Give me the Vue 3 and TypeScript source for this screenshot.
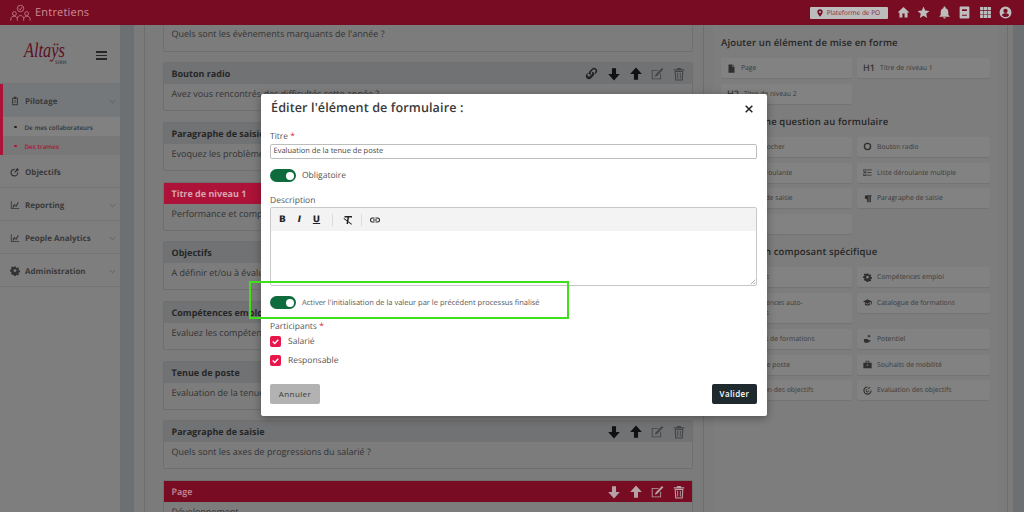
<script setup lang="ts">
const icons: Record<string, string> = {
  home: 'M10 21v-7h4v7h5.500v-9H23L12 2 1 12h3.500v9z',
  star: 'M12 17.800 18.800 22l-1.800-7.700L23 9.100l-7.900-.7L12 1 8.900 8.400 1 9.100l6 5.200L5.200 22z',
  bell: 'M12 23c1.300 0 2.400-1 2.400-2.300H9.600C9.600 22 10.700 23 12 23zm7-6.500V11c0-3.400-1.800-6.200-5-7V3.200C14 2 13.100 1 12 1s-2 1-2 2.200V4c-3.200.8-5 3.600-5 7v5.500l-2.500 2.300v.9h19v-.9z',
  book: 'M4.500 1h15A1.500 1.500 0 0 1 21 2.500v19a1.500 1.500 0 0 1-1.500 1.500h-15A1.500 1.500 0 0 1 3 21.500v-19A1.500 1.500 0 0 1 4.500 1zM7.500 6v3h9V6zm0 10v2h9v-2z',
  grid: 'M2 2h6v6H2zM9 2h6v6H9zM16 2h6v6h-6zM2 9h6v6H2zM9 9h6v6H9zM16 9h6v6h-6zM2 16h6v6H2zM9 16h6v6H9zM16 16h6v6h-6z',
  user: 'M12 1a11 11 0 1 0 0 22 11 11 0 0 0 0-22zm0 4a4 4 0 1 1 0 8 4 4 0 0 1 0-8zm0 15.500a8 8 0 0 1-6.500-3.500c.03-2.200 4.300-3.400 6.500-3.400s6.470 1.200 6.500 3.400a8 8 0 0 1-6.500 3.500z',
  pin: 'M12 1a8 8 0 0 0-8 8c0 6 8 14 8 14s8-8 8-14a8 8 0 0 0-8-8zm0 11a3 3 0 1 1 0-6 3 3 0 0 1 0 6z',
  down: 'M8.500 2h7v10H22L12 23 2 12h6.500z',
  up: 'M12 1l10 11h-6.500v10h-7V12H2z',
  edit: 'M19 11.500V21H3V5h11.500v1.500h-10v13h13v-8zM20.500 1.500l2.500 2.500L12 15.500l-3.500 1 1-3.500z',
  trash: 'M9 1.500h6L16 4h5v2H3V4h5zM4.500 7h15L18.500 23h-13zM6.500 8.500l.8 13h9.400l.8-13zM9 10h1.500v9.500H9zM13.500 10H15v9.500h-1.500z',
  link: 'M9.500 14.500a4.800 4.800 0 0 1 0-6.800l3.200-3.200a4.800 4.800 0 0 1 6.800 6.800l-1.800 1.800-1.500-1.500 1.800-1.800a2.700 2.700 0 0 0-3.800-3.800L11.500 9.200a2.700 2.700 0 0 0 0 3.800zM14.500 9.500a4.800 4.800 0 0 1 0 6.800l-3.200 3.200a4.800 4.800 0 0 1-6.800-6.800l1.800-1.800 1.500 1.500L6 12.200a2.700 2.700 0 0 0 3.800 3.800l2.700-2.700a2.700 2.700 0 0 0 0-3.800z',
  clipboard: 'M9 2h6v2h3a1 1 0 0 1 1 1v16a1 1 0 0 1-1 1H6a1 1 0 0 1-1-1V5a1 1 0 0 1 1-1h3zm-2 4v14h10V6h-2v1H9V6zm1.500 4h7v1.500h-7zm0 4h7v1.500h-7z',
  bullseye: 'M11 4a9.500 9.500 0 1 0 9 9h-3a6.500 6.500 0 1 1-6-6zM14 6l4-4 1 3 3 1-4 4h-2l-4 4-2-2 4-4z',
  chart: 'M2 3h2v16h18v2H2zM6 17l4-8 4 4 5-8 2 1-6 11-4-4-3 6z',
  cog: 'M10 1h4l.6 3 1.900.800 2.500-1.700 2.900 2.900-1.700 2.500.800 1.900 3 .6v4l-3 .6-.800 1.900 1.700 2.500-2.900 2.900-2.500-1.700-1.900.800-.6 3h-4l-.6-3-1.900-.800L5 20.900 2.100 18l1.700-2.500L3 13.600l-3-.6V9l3-.6.800-1.900L2.100 4 5 1.100l2.500 1.700 1.900-.800zm2 6.500a3.500 3.500 0 1 0 0 7 3.500 3.500 0 0 0 0-7z',
  file: 'M4 1h10v7h6v15H4zM15.500 1 20 6.500h-4.500z',
  radio: 'M12 2a10 10 0 1 0 0 20 10 10 0 0 0 0-20zm0 3.500a6.500 6.500 0 1 1 0 13 6.500 6.500 0 0 1 0-13z',
  list: 'M1 3h8v6H1zM2.500 4.500v3h5v-3zM1 15h8v6H1zM2.500 16.500v3h5v-3zM11 4h12v2H11zM11 11h12v2H11zM1 11h8v2H1zM11 18h12v2H11z',
  para: 'M9 3h14v3h-2v16h-4V6h-2v16h-4v-8a5.500 5.500 0 0 1-2-11z',
  cap: 'M12 3 0 9l12 6 10-5v7h2V9zM5 13.500V18c2.500 3 11.500 3 14 0v-4.500L12 17z',
  sprout: 'M16 1l1.500 3L21 5.500 17.500 7 16 10l-1.500-3L11 5.500 14.500 4zM2 13h11l1.500 4 4.500-1 2 2-8 5H4z',
  case: 'M9 2h6a2 2 0 0 1 2 2v3h6v15H1V7h6V4a2 2 0 0 1 2-2zm0 2v3h6V4zm1 8v3h4v-3z',
  target: 'M12 1a11 11 0 1 0 11 11h-3a8 8 0 1 1-8-8zm0 6a5 5 0 1 0 5 5h-2a3 3 0 1 1-3-3zM14 4v3h3l3-3-1-1z',
}

interface Tile { label: string; icon?: string; mark?: string; wrap?: boolean }

const cards = [
  { title: 'Bouton radio', text: 'Avez vous rencontrés des difficultés cette année ?', link: true },
  { title: 'Paragraphe de saisie', text: 'Evoquez les problèmes rencontrés cette année ?' },
  { title: 'Titre de niveau 1', text: 'Performance et compétences', heading: true },
  { title: 'Objectifs', text: 'A définir et/ou à évaluer' },
  { title: 'Compétences emploi', text: 'Evaluez les compétences du salarié' },
  { title: 'Tenue de poste', text: 'Evaluation de la tenue de poste' },
  { title: 'Paragraphe de saisie', text: 'Quels sont les axes de progressions du salarié ?' },
]

const navItems = [
  { label: 'Objectifs', icon: 'bullseye', chevron: false },
  { label: 'Reporting', icon: 'chart', chevron: true },
  { label: 'People Analytics', icon: 'chart', chevron: true },
  { label: 'Administration', icon: 'cog', chevron: true },
]

const sections: { title: string; tiles: Tile[] }[] = [
  {
    title: 'Ajouter un élément de mise en forme',
    tiles: [
      { label: 'Page', icon: 'file' },
      { label: 'Titre de niveau 1', mark: 'H1' },
      { label: 'Titre de niveau 2', mark: 'H2' },
    ],
  },
  {
    title: 'Ajouter une question au formulaire',
    tiles: [
      { label: 'Case à cocher', icon: 'radio' },
      { label: 'Bouton radio', icon: 'radio' },
      { label: 'Liste déroulante', icon: 'list' },
      { label: 'Liste déroulante multiple', icon: 'list' },
      { label: 'Champ de saisie', icon: 'para' },
      { label: 'Paragraphe de saisie', icon: 'para' },
      { label: 'Date', icon: 'file' },
    ],
  },
  {
    title: 'Ajouter un composant spécifique',
    tiles: [
      { label: 'Objectifs', icon: 'target' },
      { label: 'Compétences emploi', icon: 'cog' },
      { label: 'Compétences auto-évaluées', icon: 'cog', wrap: true },
      { label: 'Catalogue de formations', icon: 'cap' },
      { label: 'Souhaits de formations', icon: 'cap' },
      { label: 'Potentiel', icon: 'sprout' },
      { label: 'Tenue de poste', icon: 'case' },
      { label: 'Souhaits de mobilité', icon: 'case' },
      { label: 'Définition des objectifs', icon: 'target' },
      { label: 'Evaluation des objectifs', icon: 'target' },
    ],
  },
]
</script>

<template>
  <div class="app">
    <header class="topbar">
      <svg class="topbar__logo" viewBox="0 0 32 28" fill="none" stroke="#cf8b9b" stroke-width="1.200">
        <circle cx="16" cy="7" r="5" />
        <path d="M13.500 7l2 2 3-4" />
        <circle cx="6.500" cy="15" r="3" />
        <circle cx="25.500" cy="15" r="3" />
        <path d="M1 26v-3c0-2 2-4 5-4s5 2 5 4v3M21 26v-3c0-2 2-4 5-4s5 2 5 4v3M11 22c1-3 3-4 5-4s4 1 5 4" />
      </svg>
      <span class="topbar__title">Entretiens</span>
      <div class="topbar__right">
        <span class="platform">
          <svg viewBox="0 0 24 24"><path :d="icons.pin" /></svg>
          Plateforme de PO
        </span>
        <svg v-for="name in ['home', 'star', 'bell', 'book', 'grid', 'user']" :key="name" class="topbar__icon" viewBox="0 0 24 24">
          <path :d="icons[name]" />
        </svg>
      </div>
    </header>

    <div class="layout">
      <aside class="sidebar">
        <div class="brand">
          <span class="brand__name">Altaÿs</span>
          <span class="brand__sub">SIRH</span>
          <span class="burger"><i /><i /><i /></span>
        </div>
        <div class="group">
          <div class="nav nav--open">
            <svg class="nav__icon" viewBox="0 0 24 24"><path :d="icons.clipboard" /></svg>
            <span class="nav__label">Pilotage</span>
            <svg class="nav__chevron" viewBox="0 0 12 12"><path d="M1.500 4 6 8l4.500-4" /></svg>
          </div>
          <div class="sub"><i />De mes collaborateurs</div>
          <div class="sub sub--active"><i />Des trames</div>
        </div>
        <div v-for="item in navItems" :key="item.label" class="nav">
          <svg class="nav__icon" viewBox="0 0 24 24"><path :d="icons[item.icon]" /></svg>
          <span class="nav__label">{{ item.label }}</span>
          <svg v-if="item.chevron" class="nav__chevron" viewBox="0 0 12 12"><path d="M1.500 4 6 8l4.500-4" /></svg>
        </div>
      </aside>

      <div class="gutter" />

      <main class="content">
        <section class="card card--clipped">
          <p class="card__text">Quels sont les évènements marquants de l'année ?</p>
        </section>
        <section v-for="card in cards" :key="card.title + card.text" class="card">
          <div class="card__head" :class="{ 'card__head--heading': card.heading }">
            <span>{{ card.title }}</span>
            <span class="card__tools">
              <svg v-if="card.link" class="tool tool--link" viewBox="0 0 24 24"><path :d="icons.link" /></svg>
              <svg class="tool" viewBox="0 0 24 24"><path :d="icons.down" /></svg>
              <svg class="tool" viewBox="0 0 24 24"><path :d="icons.up" /></svg>
              <svg class="tool tool--soft" viewBox="0 0 24 24"><path :d="icons.edit" /></svg>
              <svg class="tool tool--soft" viewBox="0 0 24 24"><path :d="icons.trash" /></svg>
            </span>
          </div>
          <p class="card__text">{{ card.text }}</p>
        </section>
        <section class="card">
          <div class="card__head card__head--page">
            <span>Page</span>
            <span class="card__tools">
              <svg class="tool" viewBox="0 0 24 24"><path :d="icons.down" /></svg>
              <svg class="tool" viewBox="0 0 24 24"><path :d="icons.up" /></svg>
              <svg class="tool" viewBox="0 0 24 24"><path :d="icons.edit" /></svg>
              <svg class="tool" viewBox="0 0 24 24"><path :d="icons.trash" /></svg>
            </span>
          </div>
          <p class="card__text">Développement</p>
        </section>
      </main>

      <aside class="palette">
        <section v-for="section in sections" :key="section.title" class="palette__section">
          <h2>{{ section.title }}</h2>
          <div class="tiles">
            <div v-for="tile in section.tiles" :key="tile.label" class="tile" :class="{ 'tile--wrap': tile.wrap }">
              <b v-if="tile.mark" class="tile__mark">{{ tile.mark }}</b>
              <svg v-else class="tile__icon" viewBox="0 0 24 24"><path :d="icons[tile.icon ?? 'file']" /></svg>
              <span>{{ tile.label }}</span>
            </div>
          </div>
        </section>
      </aside>

      <div class="rail" />
    </div>

    <div class="modal">
      <div class="modal__head">
        <h1>Éditer l'élément de formulaire :</h1>
        <svg class="modal__close" viewBox="0 0 12 12"><path d="M2 2l8 8M10 2l-8 8" /></svg>
      </div>

      <label class="label label--title">Titre <em>*</em></label>
      <div class="input">Evaluation de la tenue de poste</div>

      <div class="switch-row switch-row--first">
        <span class="switch" />
        <span>Obligatoire</span>
      </div>

      <label class="label label--desc">Description</label>
      <div class="editor">
        <div class="editor__bar">
          <b class="fmt">B</b>
          <b class="fmt fmt--i">I</b>
          <b class="fmt fmt--u">U</b>
          <span class="sep" />
          <svg class="editor__icon editor__icon--clear" viewBox="0 0 24 24">
            <path d="M5 4h15v3h-6l-2 13H9l2-13H5zM4 8l16 12-1 1.500L3 9.500z" />
          </svg>
          <span class="sep" />
          <svg class="editor__icon editor__icon--link" viewBox="0 0 24 24">
            <path d="M7 7h4v2H7a3 3 0 0 0 0 6h4v2H7A5 5 0 0 1 7 7zm6 0h4a5 5 0 0 1 0 10h-4v-2h4a3 3 0 0 0 0-6h-4zm-5 4h8v2H8z" />
          </svg>
        </div>
        <svg class="editor__grip" viewBox="0 0 8 8"><path d="M7 1 1 7M7 4.500 4.500 7" /></svg>
      </div>

      <div class="switch-row switch-row--init">
        <span class="switch" />
        <span>Activer l'initialisation de la valeur par le précédent processus finalisé</span>
      </div>

      <label class="label label--part">Participants <em>*</em></label>
      <div class="check">
        <span class="check__box"><svg viewBox="0 0 12 12"><path d="M3 6l2.200 2.200L9 4" /></svg></span>
        Salarié
      </div>
      <div class="check">
        <span class="check__box"><svg viewBox="0 0 12 12"><path d="M3 6l2.200 2.200L9 4" /></svg></span>
        Responsable
      </div>

      <div class="modal__foot">
        <button class="btn btn--cancel">Annuler</button>
        <button class="btn btn--ok">Valider</button>
      </div>

      <div class="highlight" />
    </div>
  </div>
</template>

<style>
html,
body {
  margin: 0;
  background: #7b7b7b;
}
</style>

<style scoped>
.app {
  position: relative;
  display: flex;
  flex-direction: column;
  width: 1024px;
  height: 512px;
  overflow: hidden;
  background: #7b7b7b;
  color: #2e2e2e;
  font-family: "Open Sans", "Liberation Sans", sans-serif;
  text-rendering: geometricPrecision;
}

.topbar {
  display: flex;
  flex: 0 0 25px;
  align-items: center;
  padding: 0 12px 0 10px;
  background: #770c22;
}
.topbar__logo {
  width: 21px;
  height: 18px;
}
.topbar__title {
  margin-left: 4px;
  color: #cf8b9b;
  font-size: 11px;
  letter-spacing: 0.2px;
}
.topbar__right {
  display: flex;
  align-items: center;
  gap: 7.400px;
  margin-left: auto;
}
.topbar__icon {
  width: 13px;
  height: 13px;
  fill: #bdbdbd;
}
.platform {
  display: flex;
  align-items: center;
  gap: 3px;
  width: 78px;
  height: 12px;
  margin-right: 2px;
  padding-left: 6px;
  box-sizing: border-box;
  border-radius: 1px;
  background: #bcbcbc;
  color: #8a2a40;
  font-size: 6.500px;
  white-space: nowrap;
}
.platform svg {
  flex: none;
  width: 8px;
  height: 8px;
  fill: #770c22;
}

.layout {
  display: flex;
  flex: 1;
  min-height: 0;
}

.sidebar {
  flex: 0 0 120px;
  background: #7e7e7e;
}
.brand {
  position: relative;
  height: 59px;
  box-sizing: border-box;
  border-bottom: 1px solid #757575;
}
.brand__name {
  position: absolute;
  left: 24px;
  top: 15px;
  color: #5c0f22;
  font-family: "Liberation Serif", serif;
  font-size: 21px;
  line-height: 20px;
  font-style: italic;
  transform: scaleX(0.78);
  transform-origin: left;
}
.brand__sub {
  position: absolute;
  left: 55px;
  top: 35.500px;
  font-size: 5px;
  line-height: 5px;
  font-weight: 700;
  color: #4a4a4a;
}
.burger {
  position: absolute;
  left: 96px;
  top: 26px;
  display: flex;
  flex-direction: column;
  gap: 2px;
}
.burger i {
  display: block;
  width: 11px;
  height: 1.500px;
  background: #262626;
}

.group {
  border-left: 3px solid #ad1238;
}
.nav {
  display: flex;
  align-items: center;
  height: 33px;
  box-sizing: border-box;
  padding: 2px 0 0 10px;
  border-bottom: 1px solid #757575;
}
.group .nav {
  padding: 1px 0 0 7px;
  border-bottom: 0;
  background: #75787a;
}
.nav__icon {
  flex: none;
  width: 10px;
  height: 10px;
  margin-right: 5px;
  fill: #333;
}
.nav__label {
  font-size: 8px;
  font-weight: 700;
  color: #3a3a3a;
}
.nav__chevron {
  width: 7px;
  height: 7px;
  margin-left: auto;
  margin-right: 4px;
  fill: none;
  stroke: #565656;
  stroke-width: 1.200;
}
.sub {
  display: flex;
  align-items: center;
  height: 19px;
  box-sizing: border-box;
  padding: 1px 0 0 11px;
  background: #818181;
  color: #333;
  font-size: 6.300px;
  font-weight: 600;
}
.sub i {
  width: 2.500px;
  height: 2.500px;
  margin-right: 8px;
  border-radius: 50%;
  background: #222;
}
.sub--active {
  background: #787878;
  color: #ad1238;
}
.sub--active i {
  background: #ad1238;
}

.gutter {
  flex: 0 0 14px;
  background: #6c7073;
}

.content {
  flex: 0 0 560px;
  box-sizing: border-box;
  padding: 0 10px 0 18px;
  margin-left: 10px;
  border-left: 1px solid #6e6e6e;
  border-right: 1px solid #6e6e6e;
  overflow: hidden;
}
.card {
  height: 49px;
  box-sizing: border-box;
  margin-bottom: 10.700px;
  border: 1px solid #6f6f6f;
  border-radius: 2px;
  background: #7c7c7c;
}
.card--clipped {
  height: 26.500px;
  border-top: 0;
}
.card__head {
  display: flex;
  align-items: center;
  justify-content: space-between;
  height: 21px;
  padding: 0 6.500px 0 7.500px;
  background: #707274;
  color: #262626;
  font-size: 9px;
  font-weight: 700;
}
.card__head--heading {
  background: #ad1238;
  color: #d9a3b0;
}
.card__head--page {
  background: #770c22;
  color: #c88f9c;
  font-weight: 600;
}
.card__head--page .tool {
  fill: #b7a3a7;
}
.card__text {
  margin: 0;
  padding: 3px 7.500px;
  font-size: 9px;
  line-height: 13px;
  color: #333;
}
.card--clipped .card__text {
  padding-top: 2px;
}
.card__tools {
  display: flex;
  align-items: center;
  gap: 7.500px;
}
.tool {
  width: 14px;
  height: 14px;
  fill: #111;
}
.tool--soft {
  fill: #444;
}
.tool--link {
  width: 15px;
  height: 15px;
  margin-right: 1px;
  fill: #222;
}

.palette {
  flex: 0 0 284px;
  box-sizing: border-box;
  margin-left: 9px;
  padding: 11px 8px 0;
  background: #7d7d7d;
}
.palette__section {
  margin-bottom: 11px;
}
.palette h2 {
  margin: 0 0 8px;
  font-size: 9.500px;
  line-height: 14px;
  font-weight: 600;
  letter-spacing: 0.15px;
  color: #262626;
}
.tiles {
  display: grid;
  grid-template-columns: 131px 133px;
  gap: 5.800px 5px;
  align-items: start;
}
.tile {
  display: flex;
  align-items: center;
  gap: 5px;
  min-height: 20px;
  box-sizing: border-box;
  padding: 5px 20px 5px 6px;
  border-radius: 2px;
  background: #828282;
  box-shadow: 0 1px 1px rgba(0, 0, 0, 0.08);
  color: #3a3a3a;
  font-size: 6.800px;
  line-height: 10px;
}
.tile--wrap {
  padding-right: 40px;
}
.tile__icon {
  flex: none;
  width: 9px;
  height: 9px;
  fill: #2f2f2f;
}
.tile__mark {
  font-size: 9px;
  line-height: 10px;
  font-weight: 600;
  color: #333;
}

.rail {
  flex: 1;
  margin-left: 9px;
  border-left: 1px solid #6e6e6e;
  box-shadow: inset -11px 0 0 #6c7073;
}

.modal {
  position: absolute;
  left: 261px;
  top: 94px;
  width: 506px;
  height: 322px;
  box-sizing: border-box;
  padding: 0 10px 0 9px;
  border-radius: 2px;
  background: #fff;
  box-shadow: 0 2px 8px rgba(0, 0, 0, 0.35);
  color: #555;
  font-size: 8.500px;
}
.modal__head {
  display: flex;
  align-items: center;
  justify-content: space-between;
  height: 29px;
  padding-top: 1px;
  box-sizing: border-box;
}
.modal__head h1 {
  margin: -4px 0 0 1px;
  color: #3a3a3a;
  font-size: 12.600px;
  font-weight: 600;
  letter-spacing: 0.1px;
}
.modal__close {
  width: 10px;
  height: 10px;
  margin-right: 3px;
  fill: none;
  stroke: #222;
  stroke-width: 1.800;
}
.label {
  display: block;
  line-height: 12px;
}
.label--title {
  margin-top: 8px;
}
.label em {
  color: #d4163c;
  font-style: normal;
}
.input {
  height: 15px;
  margin-top: 1px;
  box-sizing: border-box;
  padding-left: 2.500px;
  border: 1px solid #bdbdbd;
  border-radius: 2px;
  line-height: 13px;
  font-size: 7.500px;
  color: #444;
}
.switch-row {
  display: flex;
  align-items: center;
  gap: 6px;
}
.switch-row--first {
  margin-top: 10px;
}
.switch-row--init {
  margin-top: 10px;
  font-size: 7.500px;
}
.switch {
  position: relative;
  width: 26px;
  height: 13px;
  border-radius: 7px;
  background: #0e6b3b;
}
.switch::after {
  content: "";
  position: absolute;
  right: 2px;
  top: 2.500px;
  width: 8px;
  height: 8px;
  border-radius: 50%;
  background: #fff;
}
.label--desc {
  margin-top: 13px;
}
.editor {
  position: relative;
  height: 79px;
  box-sizing: border-box;
  border: 1px solid #c8c8c8;
  border-radius: 2px;
}
.editor__grip {
  position: absolute;
  right: 0;
  bottom: 0;
  width: 6px;
  height: 6px;
  fill: none;
  stroke: #777;
  stroke-width: 0.800;
}
.editor__bar {
  display: flex;
  align-items: center;
  gap: 9px;
  height: 23px;
  padding-left: 7.500px;
  background: #f3f3f3;
  color: #222;
}
.fmt {
  width: 8px;
  text-align: center;
  font-family: "DejaVu Sans", sans-serif;
  font-size: 9px;
}
.fmt--i {
  font-style: italic;
}
.fmt--u {
  margin-right: 2px;
  text-decoration: underline;
}
.sep {
  width: 1px;
  height: 12px;
  background: #dcdcdc;
}
.editor__icon {
  width: 12px;
  height: 12px;
  fill: #222;
}
.editor__icon--clear {
  margin-right: -2px;
}
.editor__icon--link {
  margin-left: -2px;
}
.label--part {
  margin-top: 12px;
}
.check {
  display: flex;
  align-items: center;
  gap: 7px;
  height: 11px;
  margin-top: 8px;
}
.label--part + .check {
  margin-top: 3px;
}
.check__box {
  width: 11px;
  height: 11px;
  border-radius: 2px;
  background: #e8174a;
}
.check__box svg {
  display: block;
  fill: none;
  stroke: #fff;
  stroke-width: 1.500;
}
.modal__foot {
  display: flex;
  justify-content: space-between;
  margin-top: 18px;
}
.btn {
  height: 20px;
  padding: 0 0 2px;
  border: 0;
  border-radius: 2px;
  font-family: inherit;
  font-size: 8px;
  letter-spacing: 0.4px;
}
.btn--cancel {
  width: 50px;
  background: #b2b2b2;
  color: #3a3a3a;
}
.btn--ok {
  width: 45px;
  background: #1e2a2d;
  color: #fff;
  font-weight: 600;
}
.highlight {
  position: absolute;
  left: -12px;
  top: 187px;
  width: 320px;
  height: 38px;
  box-sizing: border-box;
  border: 2px solid #3fe01a;
}
</style>
